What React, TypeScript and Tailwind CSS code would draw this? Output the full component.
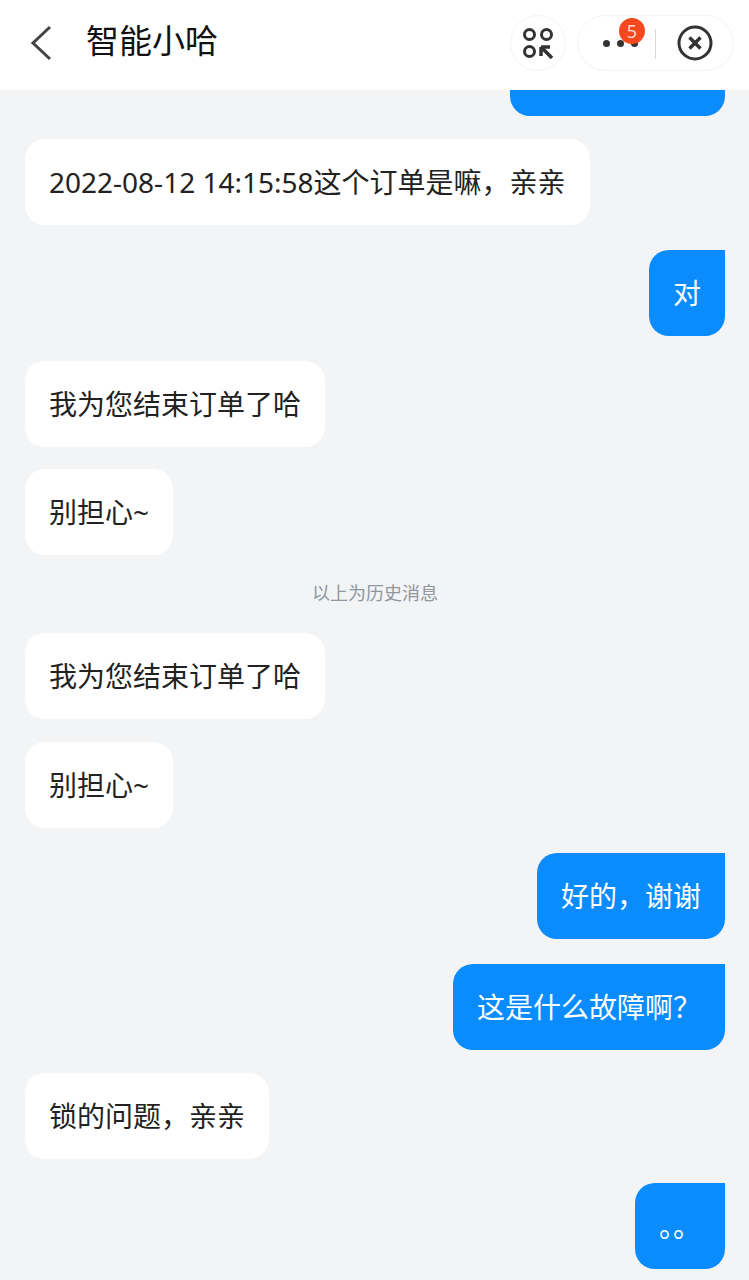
const font = { fontFamily: '"Noto Sans", "Noto Sans CJK SC", sans-serif' };

function Left({ text, mt }: { text: string; mt: string }) {
  return (
    <div className={`${mt} self-start h-[86px] flex items-center rounded-[20px] bg-white px-6 text-[28px] leading-[38px] text-[#222222]`}>
      {text}
    </div>
  );
}

function Right({ text, mt }: { text: string; mt: string }) {
  return (
    <div className={`${mt} self-end h-[86px] flex items-center rounded-[20px] rounded-tr-none bg-[#0a8cff] px-6 text-[28px] leading-[38px] text-white`}>
      {text}
    </div>
  );
}

function MiniAppIcon() {
  return (
    <svg width="32" height="32" viewBox="0 0 32 32" fill="none" stroke="#333333" strokeWidth="3">
      <circle cx="7.5" cy="7.5" r="5" />
      <circle cx="24.5" cy="7.5" r="5" />
      <circle cx="7.5" cy="24.5" r="5" />
      <path d="M19 20h9M19 20v9" strokeWidth="3.5" />
      <path d="M20 21l10 10" strokeWidth="3.5" />
    </svg>
  );
}

function CloseIcon() {
  return (
    <svg width="36" height="36" viewBox="0 0 36 36" fill="none" stroke="#333333">
      <circle cx="18" cy="18" r="16" strokeWidth="3" />
      <path d="M12.5 12.5l11 11M23.5 12.5l-11 11" strokeWidth="3.5" />
    </svg>
  );
}

function Header() {
  return (
    <div className="h-[90px] shrink-0 bg-white flex items-start">
      <svg className="ml-[30px] mt-[25px]" width="24" height="36" viewBox="0 0 24 36" fill="none" stroke="#444444" strokeWidth="3">
        <path d="M20 2L3 18l17 16" />
      </svg>
      <div className="ml-[32px] mt-[19px] text-[33px] leading-[44px] text-[#111111]">智能小哈</div>
      <div className="ml-auto mt-[15px] w-14 h-14 flex items-center justify-center rounded-full border border-[#f3f3f3]">
        <MiniAppIcon />
      </div>
      <div className="relative ml-[11px] mr-[15px] mt-[15px] w-[157px] h-14 flex items-center rounded-full border border-[#f3f3f3]">
        <div className="ml-[25px] flex gap-[7px]">
          <span className="w-[7px] h-[7px] rounded-full bg-[#333333]" />
          <span className="w-[7px] h-[7px] rounded-full bg-[#333333]" />
          <span className="w-[7px] h-[7px] rounded-full bg-[#333333]" />
        </div>
        <div className="absolute left-[41px] top-[2px] w-[26px] h-[26px] rounded-full bg-[#f5481f] flex items-center justify-center text-[18px] leading-none text-[#ffd9cc]">
          5
        </div>
        <div className="absolute left-[77px] top-[13px] w-px h-[30px] bg-[#d8d8d8]" />
        <div className="absolute left-[99px] top-[9px]">
          <CloseIcon />
        </div>
      </div>
    </div>
  );
}

export default function App() {
  return (
    <div className="w-[749px] h-[1280px] overflow-hidden bg-[#f2f4f6] flex flex-col" style={font}>
      <Header />
      <div className="flex flex-col px-6 pl-[25px]">
        <div className="self-end w-[215px] h-[26px] rounded-b-[20px] bg-[#0a8cff]" />
        <Left mt="mt-[23px]" text="2022-08-12 14:15:58这个订单是嘛，亲亲" />
        <Right mt="mt-[25px]" text="对" />
        <Left mt="mt-[25px]" text="我为您结束订单了哈" />
        <Left mt="mt-[22px]" text="别担心~" />
        <div className="mt-[26px] h-[24px] text-center text-[18px] leading-[24px] text-[#8f979f]">以上为历史消息</div>
        <Left mt="mt-[28px]" text="我为您结束订单了哈" />
        <Left mt="mt-[23px]" text="别担心~" />
        <Right mt="mt-[25px]" text="好的，谢谢" />
        <Right mt="mt-[25px]" text="这是什么故障啊？" />
        <Left mt="mt-[23px]" text="锁的问题，亲亲" />
        <Right mt="mt-[24px]" text="。。" />
      </div>
    </div>
  );
}
